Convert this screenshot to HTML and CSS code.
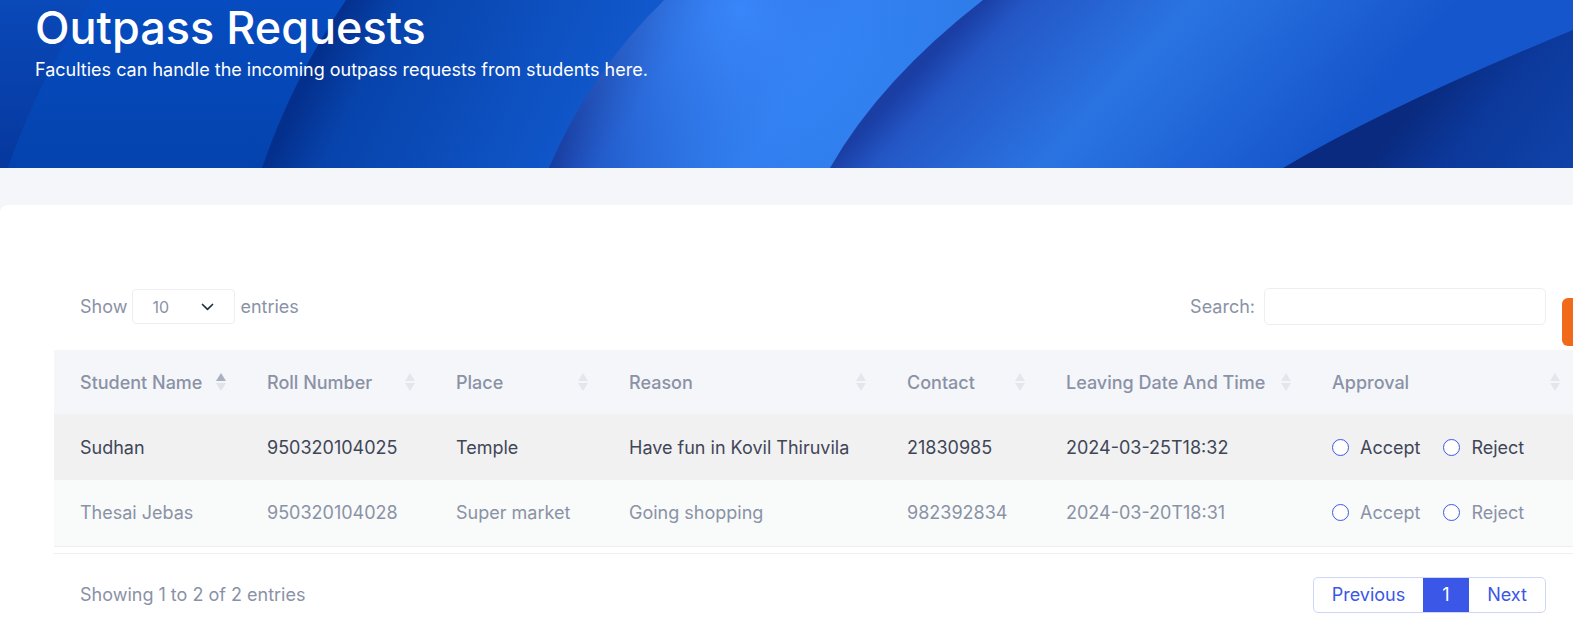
FILE: index.html
```html
<!DOCTYPE html>
<html lang="en">
<head>
<meta charset="utf-8">
<title>Outpass Requests</title>
<link rel="stylesheet" href="styles.css">
</head>
<body>
<div class="page">
  <header class="hero">
    <svg class="hero-bg" viewBox="0 0 1573 168" preserveAspectRatio="none" aria-hidden="true">
      <defs>
        <linearGradient id="g0" x1="0" y1="0" x2="0" y2="168" gradientUnits="userSpaceOnUse">
          <stop offset="0" stop-color="#0a49b9"/>
          <stop offset="1" stop-color="#06389e"/>
        </linearGradient>
        <linearGradient id="gBase" x1="0" y1="0" x2="0" y2="168" gradientUnits="userSpaceOnUse">
          <stop offset="0" stop-color="#064cc0"/>
          <stop offset="1" stop-color="#0443ae"/>
        </linearGradient>
        <linearGradient id="gB" x1="303" y1="84" x2="560" y2="205" gradientUnits="userSpaceOnUse">
          <stop offset="0" stop-color="#042f8c"/>
          <stop offset="0.18" stop-color="#0743ab"/>
          <stop offset="1" stop-color="#1158cc"/>
        </linearGradient>
        <linearGradient id="gC" x1="604" y1="84" x2="850" y2="255" gradientUnits="userSpaceOnUse">
          <stop offset="0" stop-color="#163798"/>
          <stop offset="0.14" stop-color="#1e52c0"/>
          <stop offset="0.55" stop-color="#2b78e7"/>
          <stop offset="1" stop-color="#2e7de9"/>
        </linearGradient>
        <radialGradient id="gCglow" cx="740" cy="10" r="260" gradientUnits="userSpaceOnUse">
          <stop offset="0" stop-color="#3b8bff" stop-opacity="0.9"/>
          <stop offset="1" stop-color="#3b8bff" stop-opacity="0"/>
        </radialGradient>
        <linearGradient id="gD" x1="904" y1="84" x2="1160" y2="322" gradientUnits="userSpaceOnUse">
          <stop offset="0" stop-color="#1a3ea4"/>
          <stop offset="0.1" stop-color="#2457c6"/>
          <stop offset="0.45" stop-color="#2a74e2"/>
          <stop offset="1" stop-color="#1656cc"/>
        </linearGradient>
        <linearGradient id="gE" x1="1410" y1="110" x2="1560" y2="230" gradientUnits="userSpaceOnUse">
          <stop offset="0" stop-color="#092a7e"/>
          <stop offset="0.3" stop-color="#0c389a"/>
          <stop offset="1" stop-color="#1046ad"/>
        </linearGradient>
      </defs>
      <rect x="0" y="0" width="1573" height="168" fill="url(#gBase)"/>
      <path d="M0,0 L92,0 Q38,80 8,168 L0,168 Z" fill="url(#g0)"/>
      <path d="M346,0 Q292,80 262,168 L1573,168 L1573,0 Z" fill="url(#gB)"/>
      <path d="M664,0 Q590,72 549,168 L1573,168 L1573,0 Z" fill="url(#gC)"/>
      <path d="M664,0 Q590,72 549,168 L1573,168 L1573,0 Z" fill="url(#gCglow)"/>
      <path d="M983,0 Q880,80 830,168 L1573,168 L1573,0 Z" fill="url(#gD)"/>
      <path d="M1573,30 Q1390,105 1283,168 L1573,168 Z" fill="url(#gE)"/>
    </svg>
    <div class="hero-text">
      <h1 class="hero-title">Outpass Requests</h1>
      <p class="hero-sub">Faculties can handle the incoming outpass requests from students here.</p>
    </div>
  </header>

  <main class="content">
    <section class="card">
      <div class="controls">
        <label class="length">
          <span>Show</span>
          <span class="select">
            <span class="select-val">10</span>
            <svg class="chev" width="13" height="8" viewBox="0 0 13 8"><path d="M1.5 1.5 L6.5 6.3 L11.5 1.5" fill="none" stroke="#232d42" stroke-width="1.7" stroke-linecap="round" stroke-linejoin="round"/></svg>
          </span>
          <span>entries</span>
        </label>
        <label class="search">
          <span>Search:</span>
          <span class="search-input"></span>
        </label>
      </div>

      <table class="grid">
        <colgroup>
          <col class="c1"><col class="c2"><col class="c3"><col class="c4"><col class="c5"><col class="c6"><col class="c7">
        </colgroup>
        <thead>
          <tr>
            <th><div class="th-in"><span>Student Name</span><span class="sort asc"><i class="up"></i><i class="dn"></i></span></div></th>
            <th><div class="th-in"><span>Roll Number</span><span class="sort"><i class="up"></i><i class="dn"></i></span></div></th>
            <th><div class="th-in"><span>Place</span><span class="sort"><i class="up"></i><i class="dn"></i></span></div></th>
            <th><div class="th-in"><span>Reason</span><span class="sort"><i class="up"></i><i class="dn"></i></span></div></th>
            <th><div class="th-in"><span>Contact</span><span class="sort"><i class="up"></i><i class="dn"></i></span></div></th>
            <th><div class="th-in"><span>Leaving Date And Time</span><span class="sort"><i class="up"></i><i class="dn"></i></span></div></th>
            <th><div class="th-in"><span>Approval</span><span class="sort"><i class="up"></i><i class="dn"></i></span></div></th>
          </tr>
        </thead>
        <tbody>
          <tr class="row-hover">
            <td>Sudhan</td>
            <td>950320104025</td>
            <td>Temple</td>
            <td>Have fun in Kovil Thiruvila</td>
            <td>21830985</td>
            <td>2024-03-25T18:32</td>
            <td><div class="approval"><label class="opt"><input type="radio" name="a1">Accept</label><label class="opt"><input type="radio" name="a1">Reject</label></div></td>
          </tr>
          <tr class="row-muted">
            <td>Thesai Jebas</td>
            <td>950320104028</td>
            <td>Super market</td>
            <td>Going shopping</td>
            <td>982392834</td>
            <td>2024-03-20T18:31</td>
            <td><div class="approval"><label class="opt"><input type="radio" name="a2">Accept</label><label class="opt"><input type="radio" name="a2">Reject</label></div></td>
          </tr>
        </tbody>
      </table>
      <div class="table-end"></div>

      <div class="footer">
        <div class="info">Showing 1 to 2 of 2 entries</div>
        <nav class="pager">
          <span class="pg">Previous</span>
          <span class="pg active">1</span>
          <span class="pg">Next</span>
        </nav>
      </div>
    </section>
  </main>
  <div class="settings-tab"></div>
</div>
</body>
</html>
```

FILE: styles.css
```css
* { box-sizing: border-box; }
html, body { margin: 0; padding: 0; overflow: hidden; height: 100%; }
body {
  font-family: Inter, "Noto Sans", "Liberation Sans", sans-serif;
  background: #f5f6fa;
  color: #8a92a6;
  font-size: 18px;
}
.page { width: 1600px; height: 100vh; overflow: hidden; position: relative; }

.hero {
  display: grid;
  height: 168px;
  overflow: hidden;
}
.hero-bg { grid-area: 1 / 1; width: 1573px; height: 168px; display: block; }
.hero-text { grid-area: 1 / 1; padding-left: 35px; color: #fff; }
.hero-title {
  margin: 0;
  font-size: 45px;
  line-height: 56px;
  font-weight: 500;
  letter-spacing: 0;
}
.hero-sub {
  margin: 2px 0 0;
  font-size: 18px;
  line-height: 24px;
  font-weight: 400;
}

.content { padding-top: 37px; }
.card {
  background: #fff;
  border-radius: 8px 0 0 0;
  padding: 83px 0 40px 54px;
  width: 1600px;
}

.controls {
  width: 1521px;
  display: flex;
  justify-content: space-between;
  align-items: center;
  padding: 0 29px 0 26px;
  height: 37px;
}
.length, .search { display: flex; align-items: center; }
.length { gap: 5px; }
.search { gap: 9px; }
.select {
  width: 103px;
  height: 35px;
  border: 1px solid #eee;
  border-radius: 4px;
  display: flex;
  align-items: center;
  justify-content: space-between;
  padding: 0 20px 0 19px;
  color: #8a92a6;
  font-size: 16px;
}
.chev { display: block; margin-top: 1px; }
.search-input {
  width: 282px;
  height: 37px;
  border: 1px solid #eee;
  border-radius: 5px;
  display: block;
}

.grid {
  margin-top: 25px;
  border-collapse: collapse;
  table-layout: fixed;
  width: 1521px;
}
.c1 { width: 187px; } .c2 { width: 189px; } .c3 { width: 173px; } .c4 { width: 278px; }
.c5 { width: 159px; } .c6 { width: 266px; } .c7 { width: 269px; }
.grid th {
  background: #f5f6fa;
  height: 64px;
  padding: 0 15px 0 26px;
  text-align: left;
  font-weight: 500;
  color: #8a92a6;
  white-space: nowrap;
}
.th-in { display: flex; align-items: center; justify-content: space-between; }
.sort { display: flex; flex-direction: column; gap: 2px; width: 10px; align-items: center; }
.sort i { display: block; width: 0; height: 0; border-left: 5px solid transparent; border-right: 5px solid transparent; }
.sort .up { border-bottom: 8px solid #e3e6ec; }
.sort .dn { border-top: 8px solid #e3e6ec; }
.sort.asc .up { border-bottom-color: #a9b0c1; }
.sort.asc .dn { border-top-color: #e0e3ea; }

.grid td {
  height: 66px;
  padding: 0 10px 0 26px;
  white-space: nowrap;
}
.row-hover td { background: #f1f1f2; color: #3f4657; }
.row-muted td { background: #f9fafa; color: #8a92a6; border-bottom: 1px solid #eee; }

.approval { display: flex; align-items: center; gap: 23px; }
.opt { display: flex; align-items: center; gap: 11px; }
.opt input {
  appearance: none;
  -webkit-appearance: none;
  margin: 0;
  width: 17px;
  height: 17px;
  border: 1px solid #3a57e8;
  border-radius: 50%;
  background: #fff;
}

.table-end { width: 1521px; height: 7px; border-bottom: 1px solid #eee; }

.footer {
  width: 1521px;
  display: flex;
  justify-content: space-between;
  align-items: center;
  padding: 0 29px 0 26px;
  margin-top: 23px;
}
.pager {
  display: flex;
  border: 1px solid #cfd6f7;
  border-radius: 5px;
  overflow: hidden;
  height: 36px;
}
.pg {
  display: flex;
  align-items: center;
  justify-content: center;
  color: #3a57e8;
  padding: 0 18px;
}
.pg.active { background: #3a57e8; color: #fff; width: 46px; padding: 0; }
.pg:first-child { width: 109px; }
.pg:last-child { width: 76px; }

.settings-tab {
  position: absolute;
  left: 1562px;
  top: 298px;
  width: 30px;
  height: 48px;
  background: #f16a1b;
  border-radius: 6px;
}
```
